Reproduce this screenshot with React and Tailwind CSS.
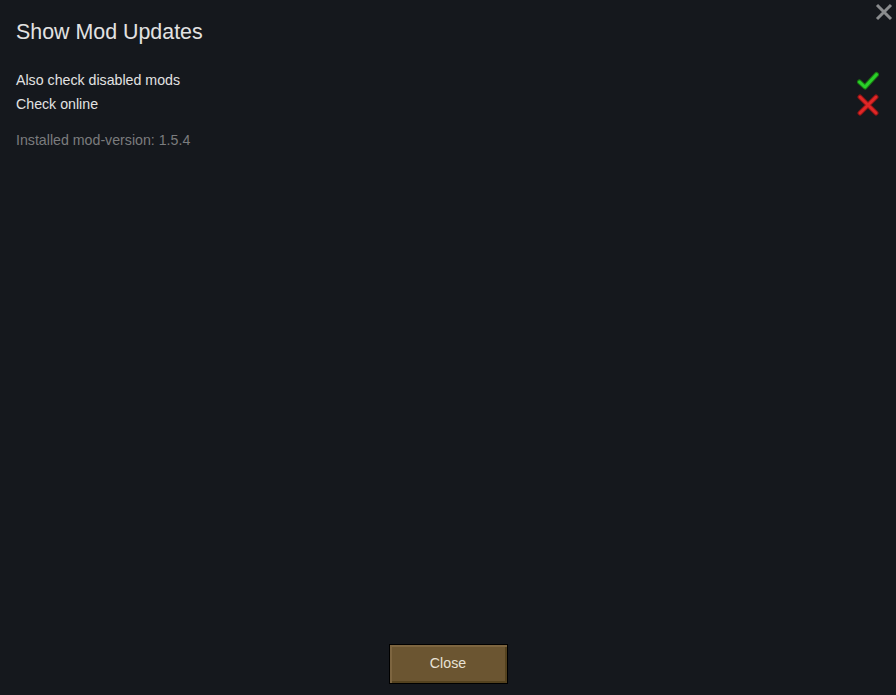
export default function App() {
  return (
    <div
      className="relative w-[896px] h-[695px] bg-[#15181d] text-[#e2e2e2] overflow-hidden flex flex-col"
      style={{ fontFamily: '"Liberation Sans", Arial, sans-serif' }}
    >
      {/* close corner */}
      <button className="absolute right-[3px] top-[3px] w-[18px] h-[18px]">
        <svg viewBox="0 0 18 18" className="w-[18px] h-[18px]">
          <path d="M2 2 L16 16 M16 2 L2 16" stroke="#8a8c8e" strokeWidth="3" />
        </svg>
      </button>

      <div className="px-4 pt-[19px] flex-1">
        <h1 className="text-[21.4px] leading-[26px]">Show Mod Updates</h1>

        <div className="mt-[24px] flex flex-col">
          <div className="flex items-center justify-between h-[24px] pr-[1px]">
            <span className="text-[14.2px]">Also check disabled mods</span>
            <svg viewBox="0 0 22 22" className="w-[22px] h-[22px]">
              <path d="M2.5 12 L8 17 L19.5 4.5" fill="none" stroke="#1a7a12" strokeWidth="5" strokeLinecap="round" strokeLinejoin="round" />
              <path d="M2.5 12 L8 17 L19.5 4.5" fill="none" stroke="#2ad02a" strokeWidth="3" strokeLinecap="round" strokeLinejoin="round" />
            </svg>
          </div>
          <div className="flex items-center justify-between h-[24px] pr-[1px]">
            <span className="text-[14.2px]">Check online</span>
            <svg viewBox="0 0 22 22" className="w-[22px] h-[22px]">
              <path d="M3 3 L19 19 M19 3 L3 19" fill="none" stroke="#8a1515" strokeWidth="5" strokeLinecap="round" />
              <path d="M3 3 L19 19 M19 3 L3 19" fill="none" stroke="#e02626" strokeWidth="3" strokeLinecap="round" />
            </svg>
          </div>
        </div>

        <p className="mt-[13px] text-[14.2px] text-[#7b7c7e]">Installed mod-version: 1.5.4</p>
      </div>

      <div className="flex justify-center pb-[11px]">
        <button className="w-[119px] h-[40px] border border-black bg-[#6b5531] text-[14.2px] leading-[36px] pb-[2px] text-[#e8e2d6] shadow-[inset_2px_2px_0_#7d6540,inset_-2px_-2px_0_#54421f]">
          Close
        </button>
      </div>
    </div>
  );
}
